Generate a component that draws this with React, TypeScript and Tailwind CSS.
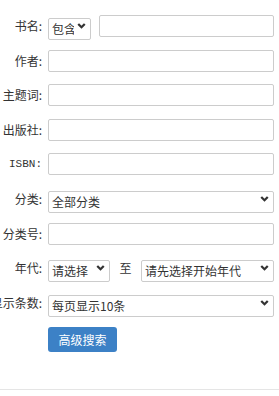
import React from 'react';

const font = { fontFamily: "'Noto Sans CJK SC', 'Noto Sans', sans-serif" };

function Chevron() {
    return (
        <svg viewBox="0 0 10 7" className="pointer-events-none absolute right-[5px] top-1/2 h-[6px] w-[9px] -translate-y-1/2">
            <path d="M1.2 1.2 L5 5 L8.8 1.2" fill="none" stroke="#333" strokeWidth="2.6" />
        </svg>
    );
}

function Select({ value, className = "" }: { value: string; className?: string }) {
    return (
        <div className={`relative h-[22px] ${className}`}>
            <select
                className="h-full w-full appearance-none rounded-[2px] border border-[#cccccc] bg-white pl-[3px] pr-4 text-[12px] leading-none text-[#333] outline-none"
                style={font}
                defaultValue={value}
            >
                <option>{value}</option>
            </select>
            <Chevron />
        </div>
    );
}

function Input() {
    return <input type="text" className="h-[22px] min-w-0 flex-1 rounded-[2px] border border-[#cccccc] bg-white outline-none" />;
}

function Row({ label, mono = false, children }: { label: string; mono?: boolean; children: React.ReactNode }) {
    return (
        <div className="flex h-[22px] items-center gap-[6px]">
            <div className="flex w-[42px] shrink-0 justify-end">
                <span
                    className={`whitespace-nowrap text-[#333] ${mono ? 'text-[11px]' : 'text-[12px]'}`}
                    style={mono ? { fontFamily: "'Liberation Mono', monospace" } : font}
                >
                    {label}
                </span>
            </div>
            <div className="flex min-w-0 flex-1 items-center">{children}</div>
        </div>
    );
}

export default function App() {
    return (
        <div className="h-[396px] w-[279px] overflow-hidden bg-white" style={font}>
            <div className="flex flex-col gap-[12.6px] pr-[5px] pt-[15px]">
                <Row label="书名:">
                    <Select value="包含" className="w-[43px] shrink-0" />
                    <div className="w-[8px] shrink-0" />
                    <Input />
                </Row>
                <Row label="作者:"><Input /></Row>
                <Row label="主题词:"><Input /></Row>
                <Row label="出版社:"><Input /></Row>
                <Row label="ISBN:" mono><Input /></Row>
                <Row label="分类:"><Select value="全部分类" className="flex-1" /></Row>
                <Row label="分类号:"><Input /></Row>
                <Row label="年代:">
                    <Select value="请选择" className="w-[62px] shrink-0" />
                    <span className="w-[31px] shrink-0 text-center text-[12px] text-[#333]">至</span>
                    <Select value="请先选择开始年代" className="flex-1" />
                </Row>
                <Row label="显示条数:"><Select value="每页显示10条" className="flex-1" /></Row>
            </div>
            <div className="mt-[12px] pl-[48px]">
                <button className="h-[25px] w-[69px] rounded-[3px] bg-[#3c81c6] text-[12px] text-white">高级搜索</button>
            </div>
            <div className="mt-[37px] h-px w-full bg-[#e5e5e5]" />
        </div>
    );
}
